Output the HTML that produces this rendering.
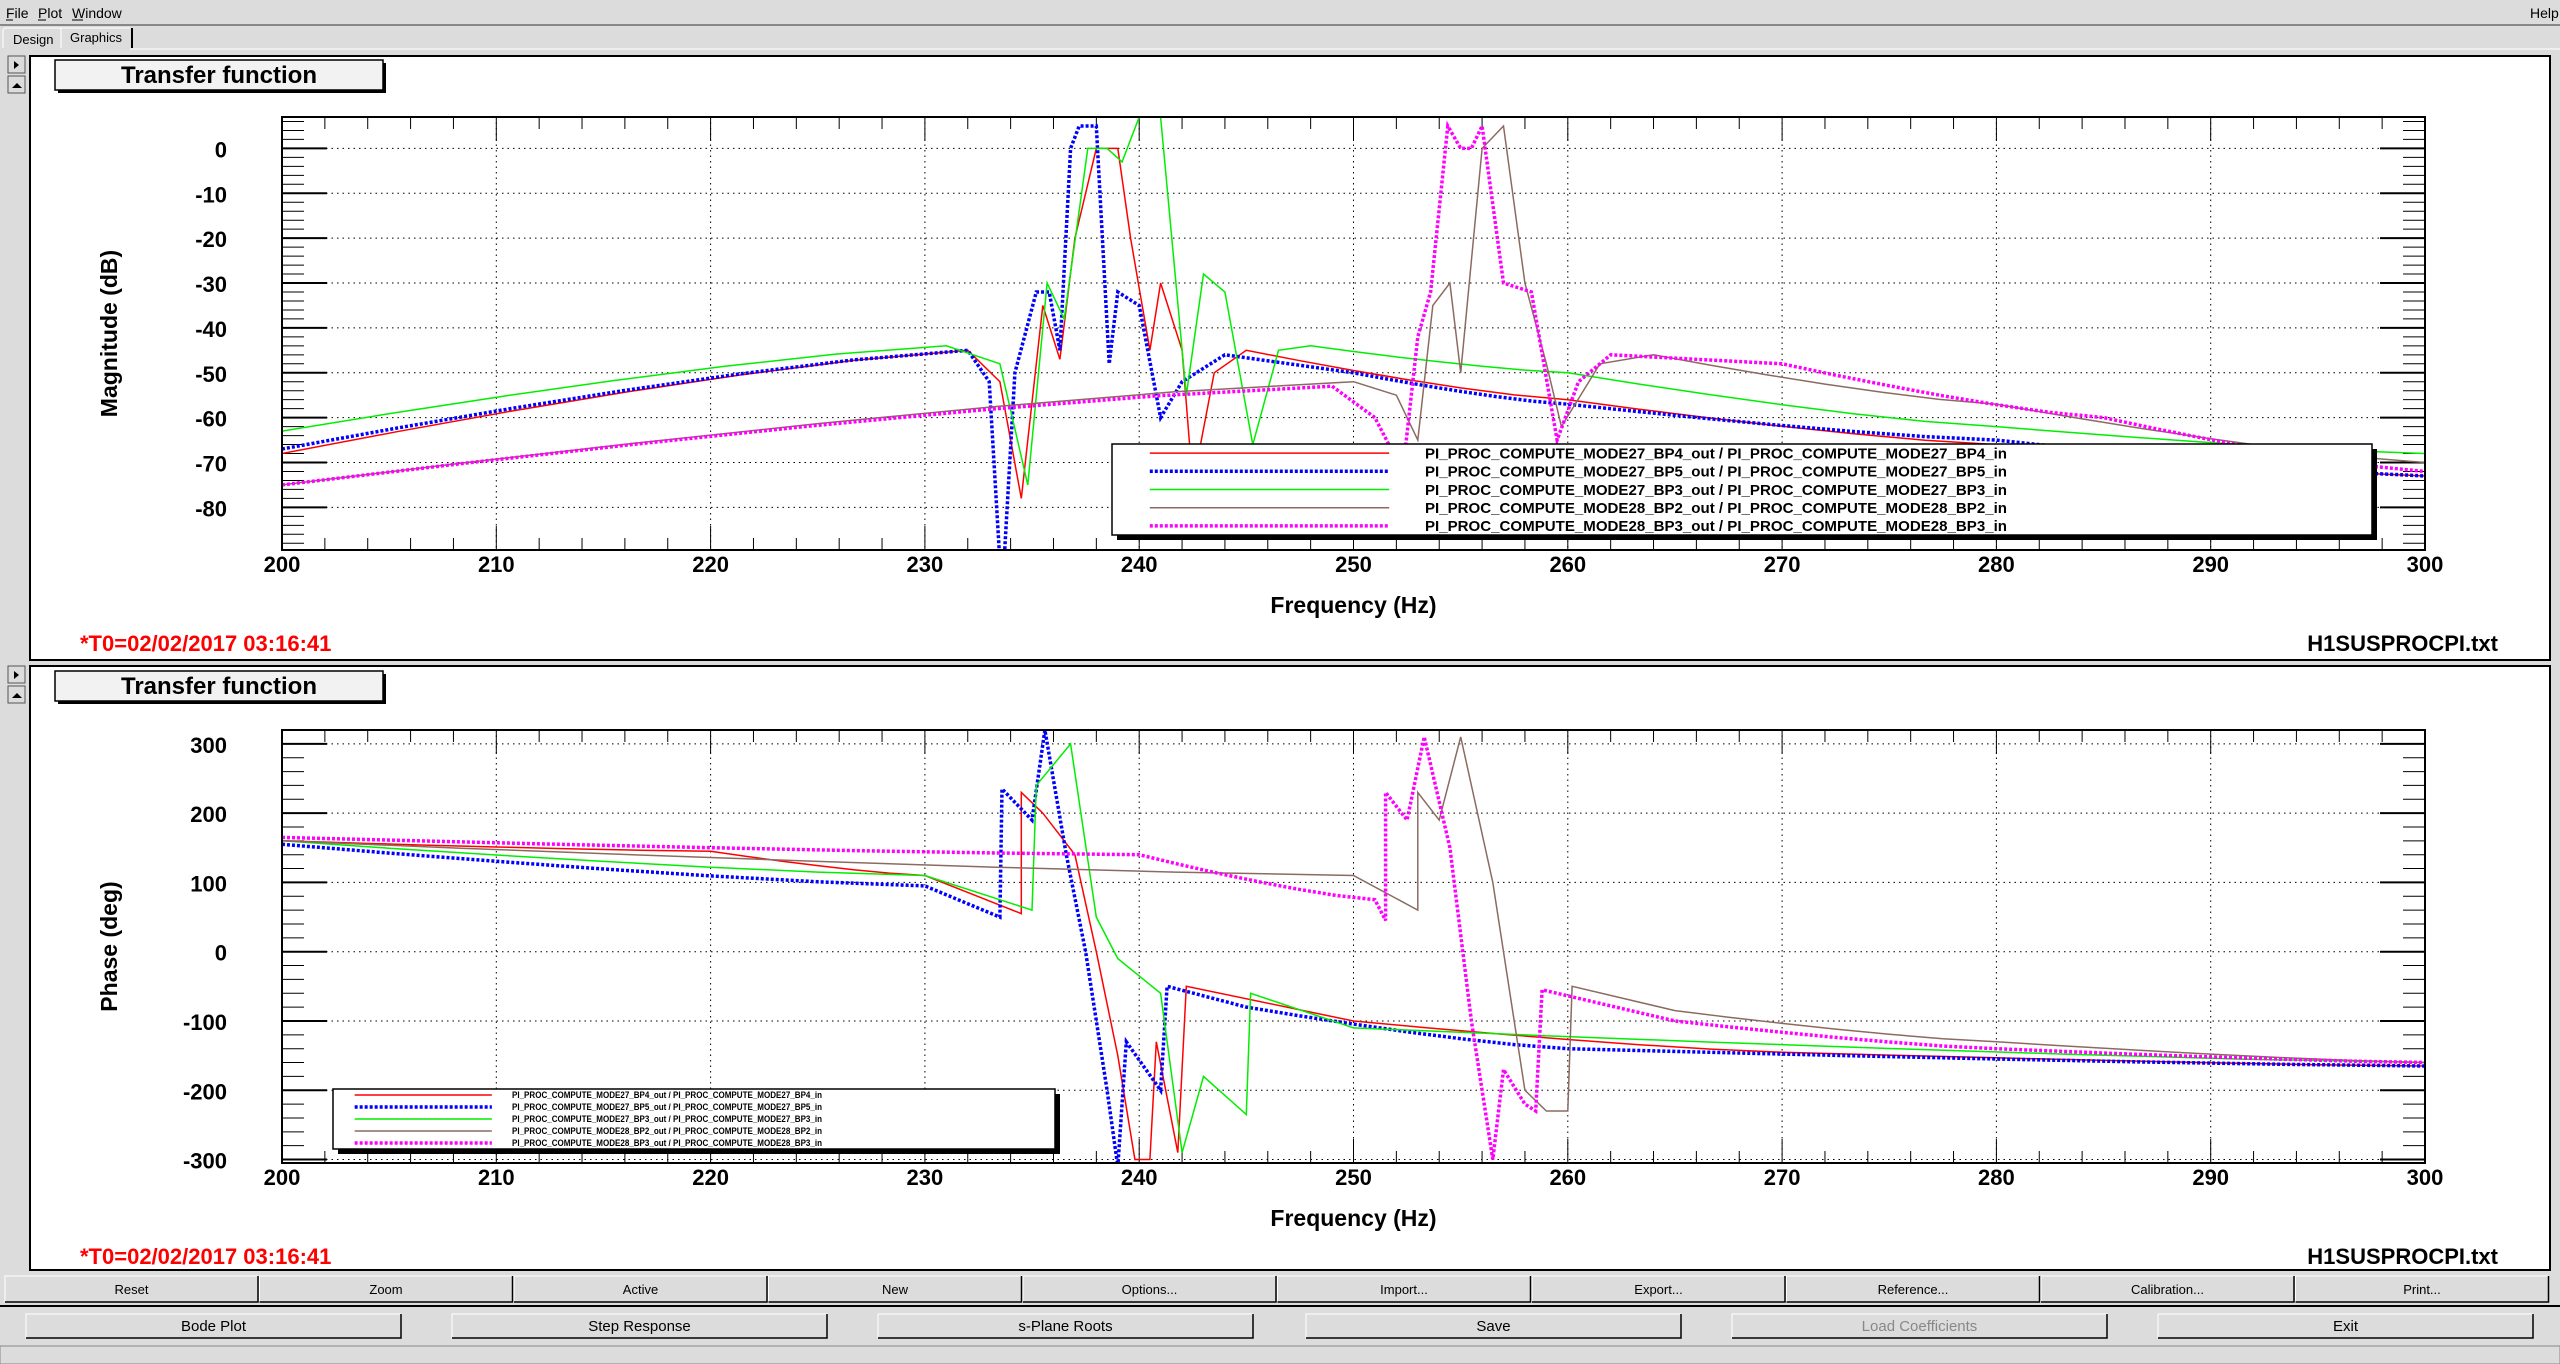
<!DOCTYPE html>
<html><head><meta charset="utf-8"><style>
html,body{margin:0;padding:0;width:2560px;height:1364px;overflow:hidden;background:#dcdcdc;font-family:"Liberation Sans",sans-serif;}
svg{display:block}
</style></head><body>
<svg id="s" width="2560" height="1364" xmlns="http://www.w3.org/2000/svg" font-family="Liberation Sans, sans-serif">
<rect x="0" y="0" width="2560" height="1364" fill="#dcdcdc"/>
<line x1="0" y1="25" x2="2560" y2="25" stroke="#888" stroke-width="2"/>
<text x="6" y="18" font-size="14">File</text><text x="38" y="18" font-size="14">Plot</text><text x="72" y="18" font-size="14">Window</text>
<text x="2530" y="18" font-size="14">Help</text>
<line x1="6" y1="20" x2="13" y2="20" stroke="#000"/><line x1="38" y1="20" x2="46" y2="20" stroke="#000"/><line x1="72" y1="20" x2="83" y2="20" stroke="#000"/>
<path d="M3 48 V30 L5 28 H60 L62 30 V48" fill="#dcdcdc" stroke="#fff"/>
<text x="13" y="44" font-size="13">Design</text>
<path d="M61 48 V28 H130" fill="#dcdcdc" stroke="#fff"/><line x1="132" y1="28" x2="132" y2="48" stroke="#000" stroke-width="2"/>
<text x="70" y="42" font-size="13">Graphics</text>
<line x1="130" y1="49" x2="2560" y2="49" stroke="#fff"/>
<g id="g"></g>
</svg>
<script>
const NS="http://www.w3.org/2000/svg",G=document.getElementById('g');
function el(t,a,txt){const e=document.createElementNS(NS,t);for(const k in a)e.setAttribute(k,a[k]);if(txt!==undefined)e.textContent=txt;G.appendChild(e);return e;}
function pane(y0,y1,arrowY){
 el('rect',{x:8,y:arrowY,width:17,height:17,fill:'#dcdcdc',stroke:'#555'});
 el('path',{d:`M14 ${arrowY+5} l5 4 l-5 4z`,fill:'#000'});
 el('rect',{x:8,y:arrowY+20,width:17,height:17,fill:'#dcdcdc',stroke:'#555'});
 el('path',{d:`M12 ${arrowY+32} l5 -5 l5 5z`,fill:'#000'});
 el('rect',{x:30,y:y0,width:2520,height:y1-y0,fill:'#fff',stroke:'#000','stroke-width':2});
}
pane(56,660,56);pane(666,1270,666);
function smooth(c){ // insert midpoints on long gentle segments for curvature
 const o=[c[0]];
 for(let i=1;i<c.length;i++){const a=c[i-1],b=c[i];
  if(b[0]-a[0]>8){const n=6;for(let k=1;k<n;k++){const t=k/n;const m=[a[0]+(b[0]-a[0])*t,a[1]+(b[1]-a[1])*(1-Math.pow(1-t,1.3))];o.push(m);} }
  o.push(b);}
 return o;}
function plot(o){
 const {x0,x1,y0,y1,vmin,vmax,ystep,ylab,ticks,tb,curves,leg,tby}=o;
 const X=f=>x0+(f-200)/100*(x1-x0), Y=v=>y0+(vmax-v)/(vmax-vmin)*(y1-y0);
 el('rect',{x:58,y:tby+3,width:328,height:30,fill:'#000'});
 el('rect',{x:55,y:tby,width:328,height:30,fill:'#f2f2f2',stroke:'#000','stroke-width':1.5});
 el('text',{x:219,y:tby+23,'font-size':24,'font-weight':'bold','text-anchor':'middle'},'Transfer function');
 const id='c'+y0;
 const cp=el('clipPath',{id:id});const r=document.createElementNS(NS,'rect');r.setAttribute('x',x0);r.setAttribute('y',y0);r.setAttribute('width',x1-x0);r.setAttribute('height',y1-y0);cp.appendChild(r);
 for(let f=210;f<300;f+=10)el('line',{x1:X(f),x2:X(f),y1:y0,y2:y1,stroke:'#000','stroke-dasharray':'1.5 4','stroke-width':1});
 for(const v of ticks){el('line',{x1:x0,x2:x1,y1:Y(v),y2:Y(v),stroke:'#000','stroke-dasharray':'1.5 4'});
  el('line',{x1:x0,x2:x0+45,y1:Y(v),y2:Y(v),stroke:'#000','stroke-width':2});el('line',{x1:x1-45,x2:x1,y1:Y(v),y2:Y(v),stroke:'#000','stroke-width':2});
  el('text',{x:x0-55,y:Y(v)+9,'font-size':22,'font-weight':'bold','text-anchor':'end'},String(v));}
 for(let v=Math.ceil(vmin/ystep)*ystep;v<=vmax;v+=ystep){el('line',{x1:x0,x2:x0+22,y1:Y(v),y2:Y(v),stroke:'#000'});el('line',{x1:x1-22,x2:x1,y1:Y(v),y2:Y(v),stroke:'#000'});}
 for(let f=200;f<=300;f+=2){const L=f%10==0?24:12;el('line',{x1:X(f),x2:X(f),y1:y1,y2:y1-L,stroke:'#000'});el('line',{x1:X(f),x2:X(f),y1:y0,y2:y0+L,stroke:'#000'});}
 for(let f=200;f<=300;f+=10)el('text',{x:X(f),y:y1+22,'font-size':22,'font-weight':'bold','text-anchor':'middle'},String(f));
 el('text',{x:(x0+x1)/2,y:y1+63,'font-size':23,'font-weight':'bold','text-anchor':'middle'},'Frequency (Hz)');
 el('text',{x:117,y:(y0+y1)/2,'font-size':23,'font-weight':'bold','text-anchor':'middle',transform:`rotate(-90 117 ${(y0+y1)/2})`},ylab);
 el('text',{x:80,y:tb,'font-size':22,'font-weight':'bold',fill:'#f00'},'*T0=02/02/2017 03:16:41');
 el('text',{x:2498,y:tb,'font-size':22,'font-weight':'bold','text-anchor':'end'},'H1SUSPROCPI.txt');
 const sty=[['#ff0000',1.5,null],['#0000ff',3.5,'3 2'],['#00ee00',1.5,null],['#8b6b60',1.5,null],['#ff00ff',3.5,'3 2']];
 curves.forEach((c0,i)=>{const c=smooth(c0);const d='M'+c.map(p=>X(p[0]).toFixed(1)+' '+Y(p[1]).toFixed(1)).join(' L');
  const a={d:d,fill:'none',stroke:sty[i][0],'stroke-width':sty[i][1],'clip-path':`url(#${id})`};if(sty[i][2])a['stroke-dasharray']=sty[i][2];el('path',a);});
 el('rect',{x:x0,y:y0,width:x1-x0,height:y1-y0,fill:'none',stroke:'#000','stroke-width':2});
 const [lx,ly,lw,lh,fs,tx,tw]=leg;
 el('rect',{x:lx+5,y:ly+5,width:lw,height:lh,fill:'#000'});
 el('rect',{x:lx,y:ly,width:lw,height:lh,fill:'#fff',stroke:'#000','stroke-width':1.5});
 const names=['PI_PROC_COMPUTE_MODE27_BP4_out / PI_PROC_COMPUTE_MODE27_BP4_in','PI_PROC_COMPUTE_MODE27_BP5_out / PI_PROC_COMPUTE_MODE27_BP5_in','PI_PROC_COMPUTE_MODE27_BP3_out / PI_PROC_COMPUTE_MODE27_BP3_in','PI_PROC_COMPUTE_MODE28_BP2_out / PI_PROC_COMPUTE_MODE28_BP2_in','PI_PROC_COMPUTE_MODE28_BP3_out / PI_PROC_COMPUTE_MODE28_BP3_in'];
 for(let i=0;i<5;i++){const yy=ly+lh*(i+0.5)/5;const a={x1:lx+lw*0.03,x2:lx+lw*0.22,y1:yy,y2:yy,stroke:sty[i][0],'stroke-width':sty[i][1]};if(sty[i][2])a['stroke-dasharray']=sty[i][2];el('line',a);
  el('text',{x:tx,y:yy+fs*0.35,'font-size':fs,'font-weight':'bold',textLength:tw,lengthAdjust:'spacingAndGlyphs'},names[i]);}
}
const mag=[
[[200,-68],[232,-45],[233.5,-52],[234.5,-78],[235.5,-35],[236.3,-47],[237,-20],[238,0],[239,0],[239.6,-20],[240.5,-45],[241,-30],[242,-45],[242.5,-75],[243.5,-50],[245,-45],[260,-56],[280,-66],[300,-73]],
[[200,-67],[232,-45],[233,-52],[233.6,-100],[234.2,-50],[235.2,-32],[235.8,-32],[236.3,-45],[236.8,0],[237.2,5],[238,5],[238.6,-48],[239,-32],[240,-35],[241,-60],[242,-52],[244,-46],[250,-50],[260,-57],[280,-65],[300,-73]],
[[200,-63],[231,-44],[233.5,-48],[234.8,-75],[235.7,-30],[236.5,-38],[237.6,0],[238.5,0],[239.2,-3],[240,7],[241,7],[242.2,-55],[243,-28],[244,-32],[245.3,-66],[246.5,-45],[248,-44],[260,-50],[280,-62],[300,-68]],
[[200,-75],[250,-52],[252,-55],[253,-65],[253.7,-35],[254.5,-30],[255,-50],[256,0],[257,5],[258,-30],[259,-48],[259.7,-62],[261.5,-48],[264,-46],[280,-57],[300,-70]],
[[200,-75],[249,-53],[251,-60],[252.3,-72],[253,-42],[253.6,-32],[254.4,5],[255,0],[255.5,0],[256,5],[257,-30],[258.3,-32],[259.5,-65],[260.5,-52],[262,-46],[270,-48],[285,-60],[300,-72]]];
const ph=[
[[200,160],[220,145],[230,110],[234.5,55],[234.5,230],[235.5,200],[237,140],[238,0],[239,-150],[239.8,-300],[240.5,-300],[240.8,-130],[241.8,-290],[242.2,-50],[250,-100],[270,-145],[300,-165]],
[[200,155],[230,95],[233.5,50],[233.6,235],[235,190],[235.6,320],[236.6,140],[237.5,0],[238.5,-200],[239,-310],[239.4,-130],[241,-200],[241.3,-50],[245,-80],[260,-140],[300,-165]],
[[200,160],[230,110],[235,60],[235.2,240],[236.8,300],[238,50],[239,-10],[241,-60],[242,-290],[243,-180],[245,-235],[245.2,-60],[250,-110],[300,-160]],
[[200,160],[250,110],[253,60],[253,230],[254,190],[255,310],[256.5,100],[257.5,-100],[258,-200],[259,-230],[260,-230],[260.2,-50],[265,-85],[280,-130],[300,-160]],
[[200,165],[240,140],[251,75],[251.5,45],[251.5,230],[252.5,190],[253.3,310],[254.5,150],[255.5,-100],[256.5,-300],[257,-170],[258,-220],[258.5,-230],[258.8,-55],[265,-100],[280,-140],[300,-160]]];
plot({x0:282,x1:2425,y0:117,y1:550,vmin:-89.5,vmax:7,ystep:2,ylab:'Magnitude (dB)',ticks:[0,-10,-20,-30,-40,-50,-60,-70,-80],tb:651,tby:60,curves:mag,leg:[1112,444,1260,91,15,1425,582]});
plot({x0:282,x1:2425,y0:730,y1:1163,vmin:-305,vmax:320,ystep:20,ylab:'Phase (deg)',ticks:[300,200,100,0,-100,-200,-300],tb:1264,tby:671,curves:ph,leg:[333,1089,722,60,9,512,310]});
function btn(x,y,w,h,t,c){el('rect',{x:x,y:y,width:w,height:h,fill:'#dcdcdc',stroke:'#fff'});el('path',{d:`M${x} ${y+h} H${x+w} V${y}`,fill:'none',stroke:'#000','stroke-width':1.5});
 el('text',{x:x+w/2,y:y+h/2+5,'font-size':c?15:13,'text-anchor':'middle',fill:c||'#000'},t);}
const r1=['Reset','Zoom','Active','New','Options...','Import...','Export...','Reference...','Calibration...','Print...'];
for(let i=0;i<10;i++)btn(5+i*254.5,1276,253,26,r1[i]);
el('line',{x1:0,y1:1306,x2:2560,y2:1306,stroke:'#000','stroke-width':2});
const r2=[['Bode Plot',26],['Step Response',452],['s-Plane Roots',878],['Save',1306],['Load Coefficients',1732],['Exit',2158]];
r2.forEach(b=>btn(b[1],1314,375,24,b[0],b[0]==='Load Coefficients'?'#888':'#000'));
el('rect',{x:0,y:1346,width:2560,height:18,fill:'#dcdcdc',stroke:'#888'});
</script>
</body></html>
